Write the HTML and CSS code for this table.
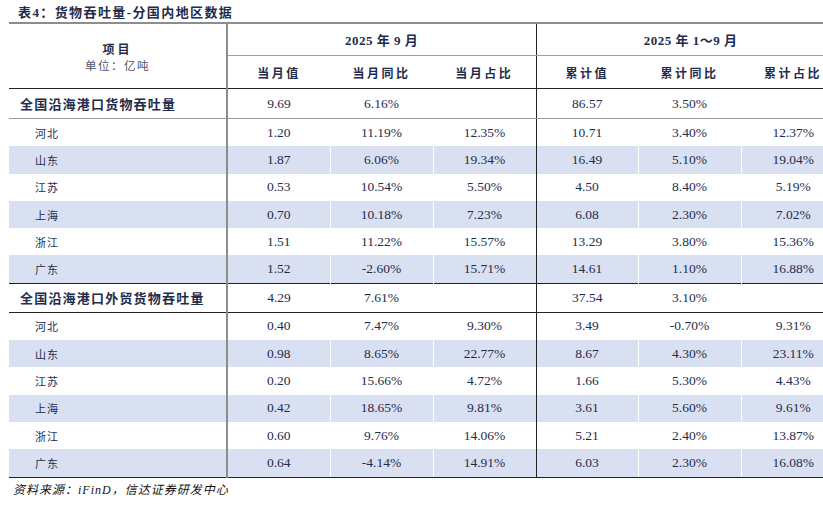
FILE: index.html
```html
<!DOCTYPE html>
<html lang="zh">
<head>
<meta charset="utf-8">
<link rel="stylesheet" href="styles.css">
</head>
<body>
<div class="page">
  <div class="title">表4：货物吞吐量-分国内地区数据</div>
  <table class="data">
    <colgroup>
      <col class="c-name"><col class="c-num"><col class="c-num"><col class="c-num"><col class="c-num2"><col class="c-num"><col class="c-num3">
    </colgroup>
    <thead>
      <tr class="h1">
        <th class="item first" rowspan="2"><div class="item-main">项目</div><div class="item-unit">单位：亿吨</div></th>
        <th class="grp sep" colspan="3">2025 年 9 月</th>
        <th class="grp" colspan="3">2025 年 1～9 月</th>
      </tr>
      <tr class="h2">
        <th class="sub">当月值</th>
        <th class="sub">当月同比</th>
        <th class="sub sep">当月占比</th>
        <th class="sub">累计值</th>
        <th class="sub">累计同比</th>
        <th class="sub">累计占比</th>
      </tr>
    </thead>
    <tbody>
      <tr class="total light">
        <td class="first name">全国沿海港口货物吞吐量</td><td>9.69</td><td>6.16%</td><td class="sep"></td><td>86.57</td><td>3.50%</td><td></td>
      </tr>
      <tr class="row">
        <td class="first region">河北</td><td>1.20</td><td>11.19%</td><td class="sep">12.35%</td><td>10.71</td><td>3.40%</td><td>12.37%</td>
      </tr>
      <tr class="row band">
        <td class="first region">山东</td><td>1.87</td><td>6.06%</td><td class="sep">19.34%</td><td>16.49</td><td>5.10%</td><td>19.04%</td>
      </tr>
      <tr class="row">
        <td class="first region">江苏</td><td>0.53</td><td>10.54%</td><td class="sep">5.50%</td><td>4.50</td><td>8.40%</td><td>5.19%</td>
      </tr>
      <tr class="row band">
        <td class="first region">上海</td><td>0.70</td><td>10.18%</td><td class="sep">7.23%</td><td>6.08</td><td>2.30%</td><td>7.02%</td>
      </tr>
      <tr class="row">
        <td class="first region">浙江</td><td>1.51</td><td>11.22%</td><td class="sep">15.57%</td><td>13.29</td><td>3.80%</td><td>15.36%</td>
      </tr>
      <tr class="row band">
        <td class="first region">广东</td><td>1.52</td><td>-2.60%</td><td class="sep">15.71%</td><td>14.61</td><td>1.10%</td><td>16.88%</td>
      </tr>
      <tr class="total dark">
        <td class="first name">全国沿海港口外贸货物吞吐量</td><td>4.29</td><td>7.61%</td><td class="sep"></td><td>37.54</td><td>3.10%</td><td></td>
      </tr>
      <tr class="row">
        <td class="first region">河北</td><td>0.40</td><td>7.47%</td><td class="sep">9.30%</td><td>3.49</td><td>-0.70%</td><td>9.31%</td>
      </tr>
      <tr class="row band">
        <td class="first region">山东</td><td>0.98</td><td>8.65%</td><td class="sep">22.77%</td><td>8.67</td><td>4.30%</td><td>23.11%</td>
      </tr>
      <tr class="row">
        <td class="first region">江苏</td><td>0.20</td><td>15.66%</td><td class="sep">4.72%</td><td>1.66</td><td>5.30%</td><td>4.43%</td>
      </tr>
      <tr class="row band">
        <td class="first region">上海</td><td>0.42</td><td>18.65%</td><td class="sep">9.81%</td><td>3.61</td><td>5.60%</td><td>9.61%</td>
      </tr>
      <tr class="row">
        <td class="first region">浙江</td><td>0.60</td><td>9.76%</td><td class="sep">14.06%</td><td>5.21</td><td>2.40%</td><td>13.87%</td>
      </tr>
      <tr class="row band last">
        <td class="first region">广东</td><td>0.64</td><td>-4.14%</td><td class="sep">14.91%</td><td>6.03</td><td>2.30%</td><td>16.08%</td>
      </tr>
    </tbody>
  </table>
  <div class="source">资料来源：iFinD，信达证券研发中心</div>
</div>
</body>
</html>
```

FILE: styles.css
```css
html, body {
  margin: 0;
  padding: 0;
  background: #ffffff;
  overflow: hidden;
}

body {
  font-family: "Liberation Serif", "Noto Sans CJK SC", serif;
  color: #1f2c4c;
}

.page {
  width: 845px;
  padding: 4px 0 0 9px;
}

.title {
  height: 18px;
  line-height: 18px;
  padding-left: 9px;
  font-family: "Liberation Serif", "Noto Sans CJK SC", sans-serif;
  font-size: 13px;
  font-weight: 700;
  letter-spacing: 1.4px;
  color: #1f2c4c;
}

.data {
  width: 836px;
  table-layout: fixed;
  border-collapse: collapse;
  border-spacing: 0;
  font-size: 13.5px;
}

.c-name { width: 218px; }
.c-num { width: 103px; }
.c-num2 { width: 102px; }
.c-num3 { width: 104px; }

.data th,
.data td {
  padding: 0;
  text-align: center;
  vertical-align: middle;
}

.data th {
  font-family: "Noto Sans CJK SC", sans-serif;
  font-weight: 700;
  font-size: 12px;
  letter-spacing: 2.5px;
  color: #1f2c4c;
}

.h1 th {
  height: 31px;
  border-top: 2px solid #8d8d8d;
}

.h1 .grp {
  border-bottom: 1px solid #a0a0a0;
  font-family: "Liberation Serif", "Noto Sans CJK SC", serif;
  font-size: 13px;
  letter-spacing: 0.5px;
}

.h2 th {
  height: 32px;
  border-bottom: 1px solid #222222;
}

.data th.item {
  border-bottom: 1px solid #222222;
}

.item-main {
  font-size: 12px;
  line-height: 17px;
  letter-spacing: 3px;
  padding-top: 2px;
}

.item-unit {
  font-weight: 400;
  font-size: 11.5px;
  line-height: 17px;
  letter-spacing: 1.5px;
  color: #4c5670;
}

.data .first {
  border-right: 2px solid #8d8d8d;
}

.data .sep {
  border-right: 1px solid #222222;
}

.row td {
  height: 27.3px;
}

.row td + td {
  border-left: 1px solid #ffffff;
}

.band td {
  background: #d9e0f1;
}

.region {
  text-align: left !important;
  padding-left: 26px !important;
  font-family: "Noto Sans CJK SC", sans-serif;
  font-size: 11px;
  letter-spacing: 1px;
}

.total td {
  height: 28px;
}

.total.light td {
  height: 29px;
  border-bottom: 1px solid #9a9a9a;
}

.total.dark td {
  border-top: 1px solid #222222;
  border-bottom: 1px solid #222222;
}

.name {
  text-align: left !important;
  padding-left: 11px !important;
  font-family: "Noto Sans CJK SC", sans-serif;
  font-weight: 700;
  font-size: 13px;
  letter-spacing: 1.2px;
}

.last td {
  border-bottom: 1px solid #222222;
}

.source {
  padding: 4px 0 0 4px;
  font-family: "Liberation Serif", "Noto Sans CJK SC", serif;
  font-style: italic;
  font-size: 12px;
  letter-spacing: 1px;
  line-height: 16px;
  color: #111111;
}
```
